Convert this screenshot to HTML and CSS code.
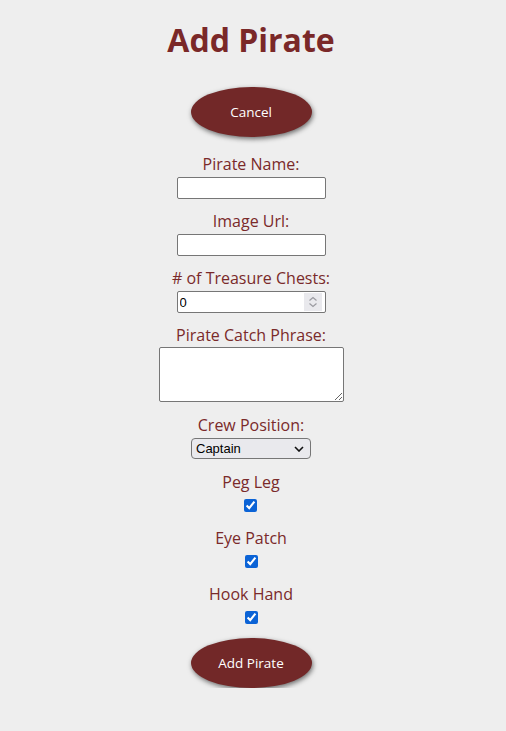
FILE: index.html
```html
<!DOCTYPE html>
<html>
<head>
<meta charset="utf-8">
<link rel="stylesheet" href="styles.css">
</head>
<body>
<div class="page">
  <h1 class="title">Add Pirate</h1>
  <button class="pill cancel" type="button">Cancel</button>
  <form class="form">
    <div class="field">
      <label class="label" for="name">Pirate Name:</label>
      <input class="text" id="name" type="text">
    </div>
    <div class="field">
      <label class="label" for="img">Image Url:</label>
      <input class="text" id="img" type="text">
    </div>
    <div class="field">
      <label class="label" for="chests">#&nbsp;of Treasure Chests:</label>
      <div class="num-wrap">
        <input class="text num" id="chests" type="number" value="0">
        <span class="spin" aria-hidden="true">
          <svg width="18" height="18" viewBox="0 0 18 18"><path d="M5.5 7.5 L9 4.5 L12.5 7.5" fill="none" stroke="#9a9aa0" stroke-width="1.2"/><path d="M5.5 10.5 L9 13.5 L12.5 10.5" fill="none" stroke="#9a9aa0" stroke-width="1.2"/></svg>
        </span>
      </div>
    </div>
    <div class="field field-area">
      <label class="label" for="phrase">Pirate Catch Phrase:</label>
      <textarea class="area" id="phrase"></textarea>
    </div>
    <div class="field field-select">
      <label class="label" for="pos">Crew Position:</label>
      <div class="sel-wrap">
        <select class="select" id="pos"><option>Captain</option></select>
        <svg class="chev" width="10" height="6" viewBox="0 0 10 6"><path d="M1 1 L5 5 L9 1" fill="none" stroke="#111" stroke-width="1.6"/></svg>
      </div>
    </div>
    <div class="field field-check">
      <label class="label" for="peg">Peg Leg</label>
      <input class="check" id="peg" type="checkbox" checked>
    </div>
    <div class="field field-check">
      <label class="label" for="eye">Eye Patch</label>
      <input class="check" id="eye" type="checkbox" checked>
    </div>
    <div class="field field-check last">
      <label class="label" for="hook">Hook Hand</label>
      <input class="check" id="hook" type="checkbox" checked>
    </div>
    <button class="pill submit" type="button">Add Pirate</button>
  </form>
</div>
</body>
</html>
```
FILE: styles.css
```css
html, body {
  margin: 0;
  padding: 0;
  background: #eeeeee;
}
body {
  font-family: "Comic Sans MS", "Open Sans", sans-serif;
  color: #7a2a2a;
}
.page {
  display: flex;
  flex-direction: column;
  align-items: center;
  padding-top: 21px;
  padding-right: 4px;
}
.title {
  margin: 0;
  font-size: 32px;
  line-height: 38px;
  font-weight: 700;
  color: #7a2828;
}
.pill {
  width: 121px;
  height: 50px;
  border: none;
  border-radius: 50%;
  background: #722828;
  color: #ffffff;
  font-family: inherit;
  font-size: 13.5px;
  box-shadow: 1px 2px 5px rgba(0, 0, 0, 0.55);
  padding: 0;
}
.cancel {
  margin-top: 28px;
}
.form {
  display: flex;
  flex-direction: column;
  align-items: center;
  margin-top: 16px;
}
.field {
  display: flex;
  flex-direction: column;
  align-items: center;
  gap: 2px;
  margin-bottom: 11px;
}
.label {
  font-size: 16px;
  line-height: 22px;
  color: #7a2a2a;
}
.text {
  box-sizing: border-box;
  width: 149px;
  height: 22px;
  margin: 0;
  border: 1px solid #767676;
  border-radius: 2px;
  background: #fff;
  font-family: Arial, "Liberation Sans", sans-serif;
  font-size: 13px;
  padding: 1px 2px;
  color: #000;
  display: block;
}
.num-wrap {
  position: relative;
}
.num {
  -moz-appearance: textfield;
  appearance: textfield;
}
.num::-webkit-inner-spin-button,
.num::-webkit-outer-spin-button {
  -webkit-appearance: none;
  margin: 0;
}
.spin {
  position: absolute;
  top: 2px;
  right: 4px;
  width: 18px;
  height: 18px;
  background: #e9e9ed;
  display: flex;
}
.field-area {
  gap: 1px;
  margin-bottom: 12px;
}
.area {
  box-sizing: border-box;
  width: 185px;
  height: 55px;
  margin: 0;
  border: 1px solid #767676;
  border-radius: 2px;
  background: #fff;
  display: block;
}
.field-select {
  margin-bottom: 12px;
}
.sel-wrap {
  position: relative;
}
.select {
  -webkit-appearance: none;
  appearance: none;
  box-sizing: border-box;
  width: 120px;
  height: 21px;
  margin: 0;
  border: 1px solid #767676;
  border-radius: 4px;
  background: #e9e9ed;
  font-family: Arial, "Liberation Sans", sans-serif;
  font-size: 13px;
  color: #000;
  padding: 0 4px;
  display: block;
}
.chev {
  position: absolute;
  top: 8px;
  right: 7px;
  pointer-events: none;
}
.field-check {
  gap: 6px;
  margin-bottom: 15px;
}
.field-check.last {
  margin-bottom: 14px;
}
.check {
  width: 13px;
  height: 13px;
  margin: 0;
  accent-color: #0b63d6;
}
```
